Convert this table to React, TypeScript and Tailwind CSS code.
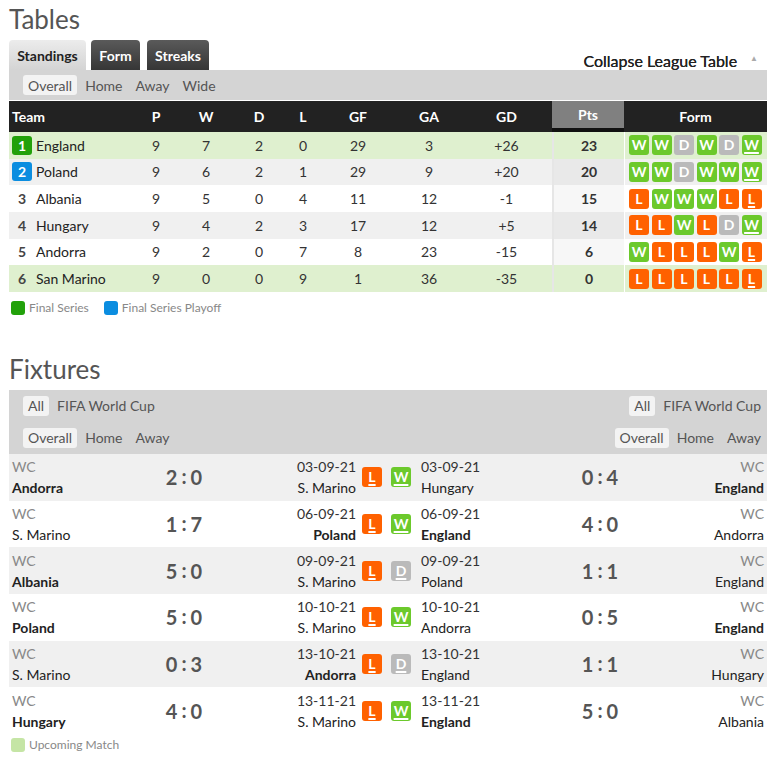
import React from "react";

type R = "W" | "D" | "L";

const badgeColor: Record<R, string> = {
  W: "bg-[#6cc92c]",
  D: "bg-[#bababa]",
  L: "bg-[#ff6100]",
};

function Badge({ r, u }: { r: R; u?: boolean }) {
  return (
    <div
      className={`w-[20px] h-[20px] rounded-[3px] flex items-center justify-center text-white font-bold text-[14px] leading-none ${badgeColor[r]}`}
    >
      <span className={u ? "underline underline-offset-[2px] decoration-[1.5px]" : ""}>{r}</span>
    </div>
  );
}

const rows = [
  { rank: 1, team: "England", p: 9, w: 7, d: 2, l: 0, gf: 29, ga: 3, gd: "+26", pts: 23, form: "WWDWDW", tone: "green" },
  { rank: 2, team: "Poland", p: 9, w: 6, d: 2, l: 1, gf: 29, ga: 9, gd: "+20", pts: 20, form: "WWDWWW", tone: "gray" },
  { rank: 3, team: "Albania", p: 9, w: 5, d: 0, l: 4, gf: 11, ga: 12, gd: "-1", pts: 15, form: "LWWWLL", tone: "white" },
  { rank: 4, team: "Hungary", p: 9, w: 4, d: 2, l: 3, gf: 17, ga: 12, gd: "+5", pts: 14, form: "LLWLDW", tone: "gray" },
  { rank: 5, team: "Andorra", p: 9, w: 2, d: 0, l: 7, gf: 8, ga: 23, gd: "-15", pts: 6, form: "WLLLWL", tone: "white" },
  { rank: 6, team: "San Marino", p: 9, w: 0, d: 0, l: 9, gf: 1, ga: 36, gd: "-35", pts: 0, form: "LLLLLL", tone: "green" },
];

const toneBg: Record<string, string> = {
  green: "bg-[#dff0cf]",
  gray: "bg-[#f0f0f0]",
  white: "bg-white",
};
const ptsBg: Record<string, string> = {
  green: "bg-[#dff0cf]",
  gray: "bg-[#e9e9e9]",
  white: "bg-[#f7f7f7]",
};

type Fx = {
  lTeam: string;
  lBold: boolean;
  lScore: string;
  lDate: string;
  lOpp: string;
  lOppBold: boolean;
  lRes: R;
  rRes: R;
  rDate: string;
  rTeam: string;
  rTeamBold: boolean;
  rScore: string;
  rOpp: string;
  rOppBold: boolean;
};

const fixtures: Fx[] = [
  { lTeam: "Andorra", lBold: true, lScore: "2:0", lDate: "03-09-21", lOpp: "S. Marino", lOppBold: false, lRes: "L", rRes: "W", rDate: "03-09-21", rTeam: "Hungary", rTeamBold: false, rScore: "0:4", rOpp: "England", rOppBold: true },
  { lTeam: "S. Marino", lBold: false, lScore: "1:7", lDate: "06-09-21", lOpp: "Poland", lOppBold: true, lRes: "L", rRes: "W", rDate: "06-09-21", rTeam: "England", rTeamBold: true, rScore: "4:0", rOpp: "Andorra", rOppBold: false },
  { lTeam: "Albania", lBold: true, lScore: "5:0", lDate: "09-09-21", lOpp: "S. Marino", lOppBold: false, lRes: "L", rRes: "D", rDate: "09-09-21", rTeam: "Poland", rTeamBold: false, rScore: "1:1", rOpp: "England", rOppBold: false },
  { lTeam: "Poland", lBold: true, lScore: "5:0", lDate: "10-10-21", lOpp: "S. Marino", lOppBold: false, lRes: "L", rRes: "W", rDate: "10-10-21", rTeam: "Andorra", rTeamBold: false, rScore: "0:5", rOpp: "England", rOppBold: true },
  { lTeam: "S. Marino", lBold: false, lScore: "0:3", lDate: "13-10-21", lOpp: "Andorra", lOppBold: true, lRes: "L", rRes: "D", rDate: "13-10-21", rTeam: "England", rTeamBold: false, rScore: "1:1", rOpp: "Hungary", rOppBold: false },
  { lTeam: "Hungary", lBold: true, lScore: "4:0", lDate: "13-11-21", lOpp: "S. Marino", lOppBold: false, lRes: "L", rRes: "W", rDate: "13-11-21", rTeam: "England", rTeamBold: true, rScore: "5:0", rOpp: "Albania", rOppBold: false },
];

function Chip({ children, active }: { children: React.ReactNode; active?: boolean }) {
  return (
    <div
      className={`px-[5px] h-[20px] flex items-center rounded-[3px] text-[14px] text-[#555] ${active ? "bg-[#f3f3f3]" : ""}`}
    >
      {children}
    </div>
  );
}

function Score({ s }: { s: string }) {
  const [a, b] = s.split(":");
  return (
    <div className="flex items-center justify-center text-[20px] font-bold text-[#555] leading-none">
      <span>{a}</span>
      <span className="mx-[4px] relative top-[-1px]">:</span>
      <span>{b}</span>
    </div>
  );
}

export default function App() {
  return (
    <div
      className="w-[775px] h-[762px] bg-white overflow-hidden"
      style={{ fontFamily: "Lato, 'Noto Sans', sans-serif" }}
    >
      <div className="ml-[9px] w-[758px]">
        {/* Tables title */}
        <div className="pt-[4px] h-[40px] text-[26px] leading-[30px] text-[#555]">Tables</div>

        {/* Tabs row */}
        <div className="flex items-end h-[30px]">
          <div className="h-[30px] w-[77px] rounded-t-[4px] bg-gradient-to-b from-[#ececec] to-[#d4d4d4] flex items-center justify-center text-[14px] font-bold text-[#222]">
            Standings
          </div>
          <div className="ml-[5px] h-[30px] w-[49px] rounded-t-[4px] bg-gradient-to-b from-[#5a5a5a] to-[#363636] flex items-center justify-center text-[14px] font-bold text-white">
            Form
          </div>
          <div className="ml-[7px] h-[30px] w-[62px] rounded-t-[4px] bg-gradient-to-b from-[#5a5a5a] to-[#363636] flex items-center justify-center text-[14px] font-bold text-white">
            Streaks
          </div>
          <div className="flex-1 flex items-center justify-end h-[30px] pt-[12px]">
            <span className="text-[16px] text-[#222] [text-shadow:0_0_0.3px_#222]">Collapse League Table</span>
            <span className="ml-[13px] mr-[9px] text-[8px] text-[#aaa] relative top-[-3px]">▲</span>
          </div>
        </div>

        {/* Sub tabs */}
        <div className="h-[30px] bg-[#d4d4d4] flex items-center pl-[14px] gap-[3px]">
          <Chip active>Overall</Chip>
          <Chip>Home</Chip>
          <Chip>Away</Chip>
          <Chip>Wide</Chip>
        </div>

        {/* Table header */}
        <div className="mt-[1px] h-[31px] bg-[#222] flex text-white font-bold text-[14px]">
          <div className="w-[122px] pl-[3px] flex items-center">Team</div>
          <div className="w-[50px] flex items-center justify-center">P</div>
          <div className="w-[50px] flex items-center justify-center">W</div>
          <div className="w-[56px] flex items-center justify-center">D</div>
          <div className="w-[32px] flex items-center justify-center">L</div>
          <div className="w-[78px] flex items-center justify-center">GF</div>
          <div className="w-[64px] flex items-center justify-center">GA</div>
          <div className="w-[91px] flex items-center justify-center">GD</div>
          <div className="w-[72px] bg-[#808080] border-b-[4px] border-[#111] flex items-center justify-center">Pts</div>
          <div className="w-[143px] flex items-center justify-center">Form</div>
        </div>

        {/* Rows */}
        {rows.map((r) => (
          <div key={r.rank} className={`h-[26.67px] flex text-[14px] text-[#333] ${toneBg[r.tone]}`}>
            <div className="w-[122px] pl-[3px] flex items-center">
              {r.rank === 1 ? (
                <div className="w-[20px] h-[19px] rounded-[3px] bg-[#22a10a] text-white font-bold flex items-center justify-center">1</div>
              ) : r.rank === 2 ? (
                <div className="w-[20px] h-[19px] rounded-[3px] bg-[#0b8de0] text-white font-bold flex items-center justify-center">2</div>
              ) : (
                <div className="w-[20px] text-center font-bold text-[#444]">{r.rank}</div>
              )}
              <span className="ml-[4px] text-[#222]">{r.team}</span>
            </div>
            <div className="w-[50px] flex items-center justify-center">{r.p}</div>
            <div className="w-[50px] flex items-center justify-center">{r.w}</div>
            <div className="w-[56px] flex items-center justify-center">{r.d}</div>
            <div className="w-[32px] flex items-center justify-center">{r.l}</div>
            <div className="w-[78px] flex items-center justify-center">{r.gf}</div>
            <div className="w-[64px] flex items-center justify-center">{r.ga}</div>
            <div className="w-[91px] flex items-center justify-center">{r.gd}</div>
            <div className={`w-[72px] border-l-[2px] border-[#e6e6e6] flex items-center justify-center font-bold text-[#333] ${ptsBg[r.tone]}`}>
              {r.pts}
            </div>
            <div className="w-[143px] border-l-[1px] border-white flex items-center pl-[4px] gap-[2.5px]">
              {r.form.split("").map((c, i) => (
                <Badge key={i} r={c as R} u={i === 5} />
              ))}
            </div>
          </div>
        ))}

        {/* Legend */}
        <div className="mt-[7px] flex items-center text-[12px] text-[#888]">
          <div className="ml-[2px] w-[14px] h-[14px] rounded-[3px] bg-[#22a10a]" />
          <span className="ml-[4px]">Final Series</span>
          <div className="ml-[15px] w-[14px] h-[14px] rounded-[3px] bg-[#0b8de0]" />
          <span className="ml-[4px]">Final Series Playoff</span>
        </div>

        {/* Fixtures title */}
        <div className="mt-[37px] h-[36px] text-[26px] leading-[30px] text-[#555]">Fixtures</div>

        {/* Fixtures filter header */}
        <div className="bg-[#d4d4d4] h-[64px] flex flex-col">
          <div className="h-[32px] flex items-center justify-between pl-[14px] pr-[1px]">
            <div className="flex items-center gap-[3px]">
              <Chip active>All</Chip>
              <Chip>FIFA World Cup</Chip>
            </div>
            <div className="flex items-center gap-[3px]">
              <Chip active>All</Chip>
              <Chip>FIFA World Cup</Chip>
            </div>
          </div>
          <div className="h-[32px] flex items-center justify-between pl-[14px] pr-[1px]">
            <div className="flex items-center gap-[3px]">
              <Chip active>Overall</Chip>
              <Chip>Home</Chip>
              <Chip>Away</Chip>
            </div>
            <div className="flex items-center gap-[3px]">
              <Chip active>Overall</Chip>
              <Chip>Home</Chip>
              <Chip>Away</Chip>
            </div>
          </div>
        </div>

        {/* Fixture rows */}
        {fixtures.map((f, i) => (
          <div
            key={i}
            className={`h-[46.67px] flex text-[14px] leading-[21px] ${i % 2 === 0 ? "bg-[#f0f0f0]" : "bg-white"}`}
          >
            {/* left half */}
            <div className="w-[378px] flex items-center">
              <div className="w-[130px] pl-[3px] flex flex-col">
                <span className="text-[#888]">WC</span>
                <span className={`text-[#222] ${f.lBold ? "font-bold" : ""}`}>{f.lTeam}</span>
              </div>
              <div className="w-[90px]">
                <Score s={f.lScore} />
              </div>
              <div className="flex-1 flex flex-col items-end text-[#333]">
                <span>{f.lDate}</span>
                <span className={`text-[#222] ${f.lOppBold ? "font-bold" : ""}`}>{f.lOpp}</span>
              </div>
              <div className="ml-[6px] mr-[5px]">
                <Badge r={f.lRes} u />
              </div>
            </div>
            {/* right half */}
            <div className="w-[380px] flex items-center">
              <div className="ml-[4px]">
                <Badge r={f.rRes} u />
              </div>
              <div className="ml-[10px] w-[130px] flex flex-col text-[#333]">
                <span>{f.rDate}</span>
                <span className={`text-[#222] ${f.rTeamBold ? "font-bold" : ""}`}>{f.rTeam}</span>
              </div>
              <div className="w-[98px]">
                <Score s={f.rScore} />
              </div>
              <div className="flex-1 pr-[3px] flex flex-col items-end">
                <span className="text-[#888]">WC</span>
                <span className={`text-[#222] ${f.rOppBold ? "font-bold" : ""}`}>{f.rOpp}</span>
              </div>
            </div>
          </div>
        ))}

        {/* Upcoming legend */}
        <div className="mt-[2px] flex items-center text-[12px] text-[#888]">
          <div className="ml-[2px] w-[14px] h-[14px] rounded-[3px] bg-[#c5e5a5]" />
          <span className="ml-[4px]">Upcoming Match</span>
        </div>
      </div>
    </div>
  );
}
